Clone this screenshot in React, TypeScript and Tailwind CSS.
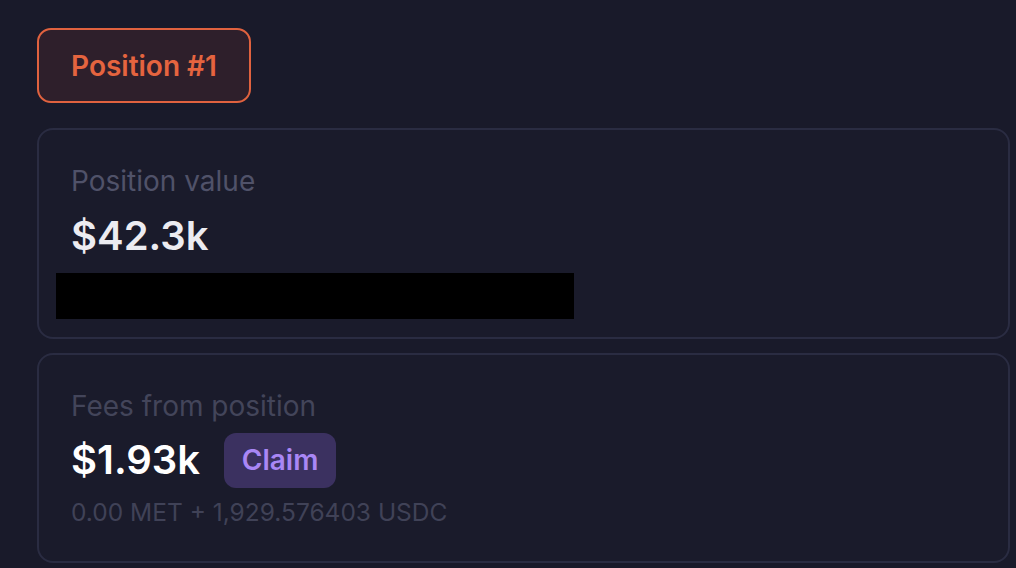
export default function App() {
  return (
    <main
      className="min-h-screen w-full bg-[#191a2a] px-[37px] pt-[28px] pb-4"
      style={{ fontFamily: "Inter, 'Noto Sans', sans-serif" }}
    >
      {/* Position tab */}
      <div className="flex">
        <div className="flex h-[75px] w-[214px] items-center justify-center rounded-[14px] border-2 border-[#e0623f] bg-[#2e1f2b] text-[28px] font-semibold text-[#e5643f]">
          Position #1
        </div>
      </div>

      <div className="mt-[25px] flex w-[973px] flex-col gap-[14px]">
        {/* Position value */}
        <div className="flex h-[211px] flex-col rounded-[16px] border-2 border-[#2a2c42] bg-[#1a1b2b] pl-[32px] pt-[34px]">
          <div className="text-[28px] leading-[34px] text-[#505269]">Position value</div>
          <div className="mt-[16px] text-[40px] leading-[44px] font-semibold text-[#ececf1]">$42.3k</div>
          <div className="mt-[15px] -ml-[15px] h-[46px] w-[518px] bg-black" />
        </div>

        {/* Fees */}
        <div className="flex h-[210px] flex-col rounded-[16px] border-2 border-[#2a2c42] bg-[#1a1b2b] pl-[32px] pt-[34px]">
          <div className="text-[28px] leading-[34px] text-[#43455a]">Fees from position</div>
          <div className="mt-[9px] flex items-center gap-[24px]">
            <span className="text-[40px] leading-[56px] font-semibold text-white">$1.93k</span>
            <button className="flex h-[55px] w-[112px] items-center justify-center rounded-[12px] bg-[#3b3160] text-[28px] font-semibold text-[#a987f5]">
              Claim
            </button>
          </div>
          <div className="mt-[9px] text-[24.5px] leading-[30px] text-[#404257]">
            0.00 MET + 1,929.576403 USDC
          </div>
        </div>
      </div>
    </main>
  )
}
